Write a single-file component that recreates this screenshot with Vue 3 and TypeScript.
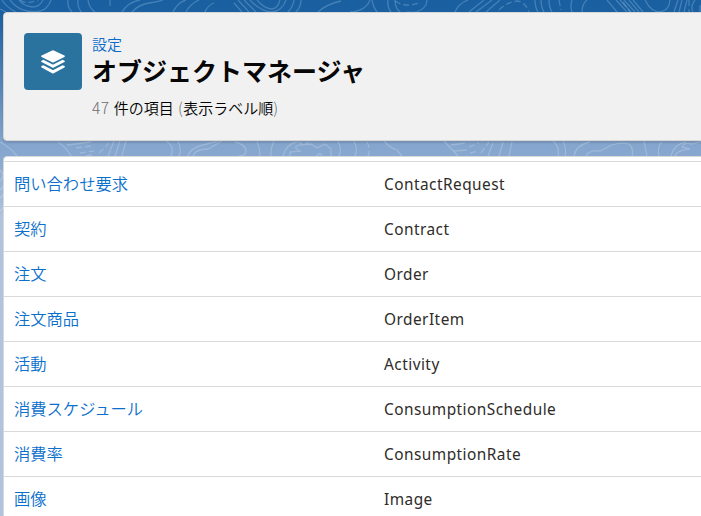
<script setup lang="ts">
interface ObjectRow {
  label: string
  apiName: string
}

const rows: ObjectRow[] = [
  { label: '問い合わせ要求', apiName: 'ContactRequest' },
  { label: '契約', apiName: 'Contract' },
  { label: '注文', apiName: 'Order' },
  { label: '注文商品', apiName: 'OrderItem' },
  { label: '活動', apiName: 'Activity' },
  { label: '消費スケジュール', apiName: 'ConsumptionSchedule' },
  { label: '消費率', apiName: 'ConsumptionRate' },
  { label: '画像', apiName: 'Image' },
]

// Contour lines visible above the header
const topContours: string[] = [
  'M0 9L6 12M2 0Q7 8 16 12M10 0Q17 9 27 11Q41 13 46 8Q50 4 51 0M19 0Q23 6 32 7Q40 7 43 0',
  'M68 0Q67 7 72 12M78 0Q77 6 81 12M88 0Q89 8 95 12M122 12Q128 2 140 0M132 12Q138 5 149 3Q158 2 163 0',
  'M173 12Q178 2 186 0M186 12Q190 4 199 0M205 12Q207 6 214 3',
  'M234 3L242 12M238 0L249 12M244 0L256 12M250 0Q261 12 272 12Q282 11 286 0M257 0Q265 9 272 9Q278 8 280 0M288 12Q293 7 294 0M296 12Q301 7 301 0',
  'M318 12Q327 4 341 1M350 12Q366 11 370 0M372 0Q373 7 377 12M388 0Q387 7 391 12M395 0Q395 8 400 12M407 12Q420 14 426 5L427 0M455 12Q458 4 468 0',
  'M469 12L484 0M476 12L492 0M486 12L500 0M535 0Q535 7 538 12M541 0Q541 7 544 12M549 0Q549 7 552 12M572 0Q570 6 572 12M582 12Q582 4 587 0',
  'M607 0L617 12M616 0L627 12M620 0L631 12M624 0L635 12M629 0L639 12M633 0L643 12M645 0Q651 12 660 12Q669 11 670 0M674 12L678 0M679 12L682 0M684 12L687 0M693 12Q690 6 695 0M700 12V5',
]
const topDashes: string[] = ['M20 0Q26 5 38 0', 'M110 0V9', 'M499 10Q507 2 518 1Q526 3 529 12', 'M559 0L561 10', 'M395 1Q405 8 419 3', 'M623 2L630 12', 'M689 0V12']

// Contour lines visible in the gap between the cards
const gapContours: string[] = [
  'M0 142Q10 147 17 156M58 142Q66 147 71 156M67 145L91 142M108 156L114 141M115 156L120 141M122 156L126 141M166 141Q175 146 171 156M178 141Q182 149 179 156M188 156Q190 148 203 145L218 141M193 156Q195 149 208 149L222 141',
  'M235 142Q247 145 246 152Q245 156 239 156M257 141Q260 149 260 156M274 141Q270 149 271 156M283 156Q286 144 297 142M290 156V152L300 151Q292 147 299 145L311 144L317 148L325 144L331 149V156M298 142L304 145L309 142M317 156Q320 151 322 156M338 141Q342 149 339 156M354 141Q358 149 355 156M384 141Q390 148 397 150L402 156M444 141L458 156M451 145L465 143M454 151L467 150',
  'M488 156L493 143M499 156L503 142M509 156L512 142M553 141Q560 147 558 156M563 141Q567 149 565 156M574 156Q576 145 590 142M586 156Q588 150 600 151L612 145Q622 142 629 144Q634 149 632 156M644 141L647 156M659 156Q657 146 662 142M671 156Q674 144 686 142M675 156Q677 150 690 149L682 147Q684 142 692 144L701 141',
]
const gapDashes: string[] = ['M76 148L91 146M80 153L94 151M86 156L94 154', 'M99 153L109 143', 'M367 142Q371 149 368 156', 'M469 147L479 143M470 153L478 151M481 153L489 142']
const sideContours: string[] = ['M0 170Q6 176 0 181', 'M0 190L4 186M0 198L4 194M0 211L4 207']
</script>

<template>
  <main class="page">
    <svg class="contours" viewBox="0 0 701 240" aria-hidden="true">
      <path v-for="d in topContours" :key="d" :d="d" class="line top" />
      <path v-for="d in topDashes" :key="d" :d="d" class="line top dashed" />
      <path v-for="d in gapContours" :key="d" :d="d" class="line" />
      <path v-for="d in gapDashes" :key="d" :d="d" class="line dashed" />
      <path v-for="d in sideContours" :key="d" :d="d" class="line" />
    </svg>

    <header class="header">
      <div class="tile">
        <svg class="layers" viewBox="0 0 24 24" aria-hidden="true">
          <path d="M11.2.4Q12 0 12.8.4L23.4 5.6Q24.4 6.3 23.4 7L12.8 12.2Q12 12.6 11.2 12.2L.6 7Q-.4 6.3.6 5.6Z" />
          <path d="M.6 10.7L2.4 9.8L11.2 14.2Q12 14.6 12.8 14.2L21.6 9.8L23.4 10.7Q24.4 11.4 23.4 12.1L12.8 17.6Q12 18 11.2 17.6L.6 12.1Q-.4 11.4.6 10.7Z" />
          <path d="M.6 16.1L2.4 15.2L11.2 19.8Q12 20.2 12.8 19.8L21.6 15.2L23.4 16.1Q24.4 16.8 23.4 17.5L12.8 23.2Q12 23.6 11.2 23.2L.6 17.5Q-.4 16.8.6 16.1Z" />
        </svg>
      </div>
      <div class="titles">
        <a class="crumb">設定</a>
        <h1 class="title">オブジェクトマネージャ</h1>
        <p class="summary"><span class="muted">47</span> 件の項目 <span class="muted">(</span>表示ラベル順<span class="muted">)</span></p>
      </div>
    </header>

    <section class="card">
      <div v-for="row in rows" :key="row.apiName" class="row">
        <a class="label">{{ row.label }}</a>
        <span class="api">{{ row.apiName }}</span>
      </div>
    </section>
  </main>
</template>

<style>
body {
  margin: 0;
  overflow: hidden;
}
</style>

<style scoped>
.page {
  position: relative;
  box-sizing: border-box;
  height: 516px;
  padding: 12px 0 0 3px;
  overflow: hidden;
  display: flex;
  flex-direction: column;
  gap: 15px;
  background: linear-gradient(#1a5f9f 0, #1b60a0 14px, #84a5cd 143px, #88a8d0 157px, #b0c4df 220px);
  font-family: "Noto Sans", "Noto Sans CJK JP", sans-serif;
}
.contours {
  position: absolute;
  left: 0;
  top: 0;
  width: 701px;
  height: 240px;
}
.line {
  fill: none;
  stroke: #fff;
  stroke-opacity: 0.2;
  stroke-width: 1.3;
}
.top {
  stroke: #8fbce6;
  stroke-opacity: 0.36;
}
.dashed {
  stroke-dasharray: 6 3;
}
.header {
  position: relative;
  box-sizing: border-box;
  flex: none;
  height: 129px;
  margin-right: -8px;
  padding: 20px 20px 0;
  display: flex;
  gap: 10px;
  border: 1px solid #d8d6d4;
  border-radius: 4px;
  background: #f1f1f1;
  box-shadow: 0 2px 2px rgba(0, 0, 0, 0.12);
}
.tile {
  flex: none;
  width: 58px;
  height: 57px;
  display: flex;
  align-items: center;
  justify-content: center;
  border-radius: 4px;
  background: #2a739e;
}
.layers {
  width: 24px;
  height: 24px;
  fill: #fff;
}
.titles {
  display: flex;
  flex-direction: column;
  font-family: "Noto Sans CJK JP", sans-serif;
}
.crumb {
  font-size: 15px;
  line-height: 22px;
  font-weight: 350;
  color: #0b6bcb;
}
.title {
  margin: -1px 0 0;
  font-size: 25px;
  line-height: 32px;
  font-weight: 700;
  color: #080707;
  white-space: nowrap;
}
.summary {
  margin: 10px 0 0;
  font-size: 15px;
  line-height: 22px;
  font-weight: 350;
  word-spacing: 0.8px;
  color: #000;
  white-space: nowrap;
}
.muted {
  font-size: 15.5px;
  font-weight: 300;
  letter-spacing: 0.5px;
  color: #6b6b70;
}
.card {
  position: relative;
  box-sizing: border-box;
  flex: none;
  height: 380px;
  margin-right: -8px;
  padding-top: 4px;
  border: 1px solid #d8d8d8;
  border-radius: 4px;
  background: #fff;
}
.row {
  box-sizing: border-box;
  height: 45px;
  display: grid;
  grid-template-columns: 370px 1fr;
  align-items: center;
  padding-left: 10px;
  border-top: 1px solid #d9d9d9;
  line-height: 24px;
}
.label {
  padding-bottom: 2px;
  font-family: "Noto Sans CJK JP", sans-serif;
  font-size: 16.3px;
  font-weight: 350;
  color: #0b6fcc;
}
.api {
  padding-top: 2px;
  font-size: 15.4px;
  letter-spacing: 0.47px;
  color: #2e2b29;
}
</style>
